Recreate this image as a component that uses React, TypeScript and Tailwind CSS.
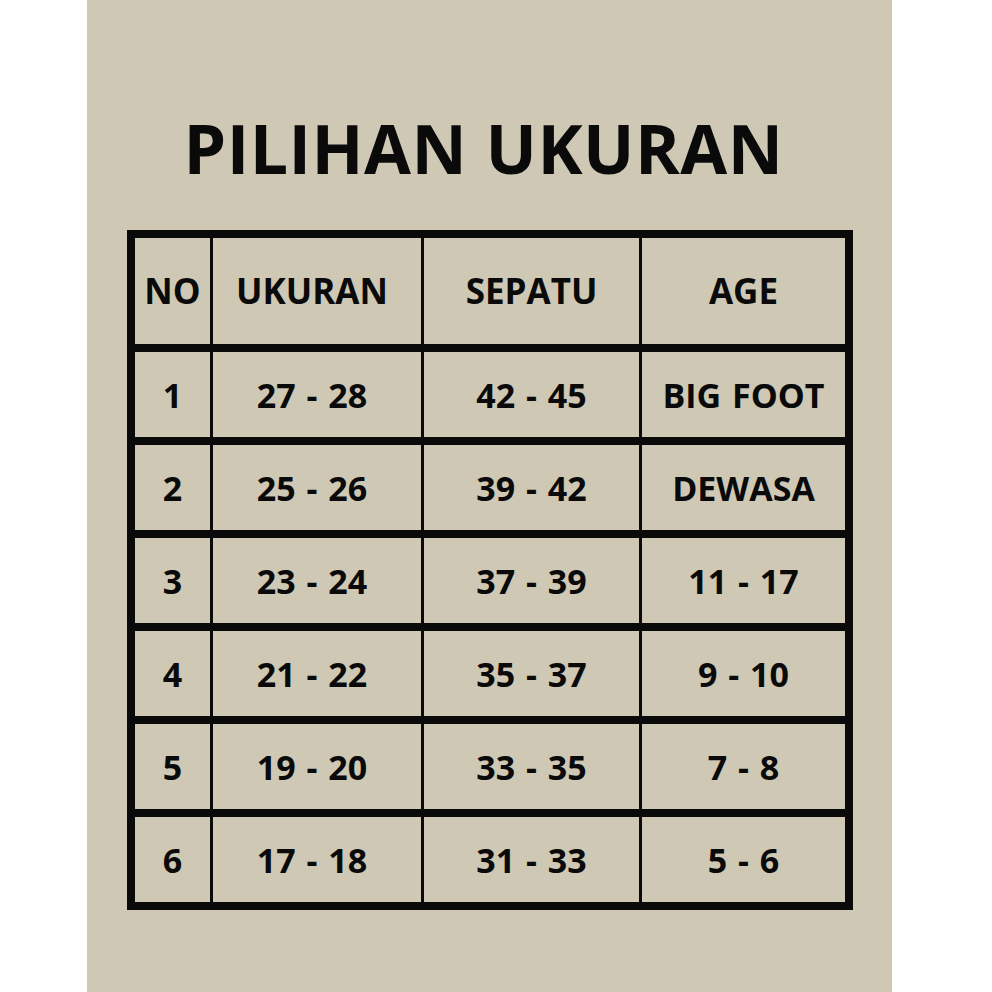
import React from "react";

const rows = [
  ["1", "27 - 28", "42 - 45", "BIG FOOT"],
  ["2", "25 - 26", "39 - 42", "DEWASA"],
  ["3", "23 - 24", "37 - 39", "11 - 17"],
  ["4", "21 - 22", "35 - 37", "9 - 10"],
  ["5", "19 - 20", "33 - 35", "7 - 8"],
  ["6", "17 - 18", "31 - 33", "5 - 6"],
];

const pads = ["", "pr-[10px]", "", ""];

export default function App() {
  const font = { fontFamily: '"Open Sans", "Noto Sans", sans-serif' };
  return (
    <div className="w-[992px] h-[992px] bg-white" style={font}>
      <div className="ml-[87px] w-[805px] h-[992px] bg-[#cec8b4] flex flex-col">
        <div className="h-[230px] flex items-center justify-center pr-[12px] pt-[66px]">
          <h1 className="text-[68px] font-bold text-[#0a0a0a] leading-none tracking-[0.5px]">
            PILIHAN UKURAN
          </h1>
        </div>
        <div className="ml-[40px] w-[726px] border-[8px] border-[#0a0a0a] bg-[#0a0a0a] grid grid-cols-[75px_208px_215px_203px] gap-x-[3px] gap-y-[8px]">
          {["NO", "UKURAN", "SEPATU", "AGE"].map((h, i) => (
            <div
              key={h}
              className={
                "h-[106px] bg-[#cec8b4] flex items-center justify-center pt-[1px] text-[35px] font-bold text-[#0a0a0a] whitespace-pre " +
                pads[i]
              }
            >
              {h}
            </div>
          ))}
          {rows.map((r) =>
            r.map((c, i) => (
              <div
                key={r[0] + "-" + i}
                className={
                  "h-[85px] bg-[#cec8b4] flex items-center justify-center pt-[2px] text-[34px] font-bold text-[#0a0a0a] whitespace-pre [word-spacing:2px] " +
                  pads[i]
                }
              >
                {c}
              </div>
            ))
          )}
        </div>
      </div>
    </div>
  );
}
